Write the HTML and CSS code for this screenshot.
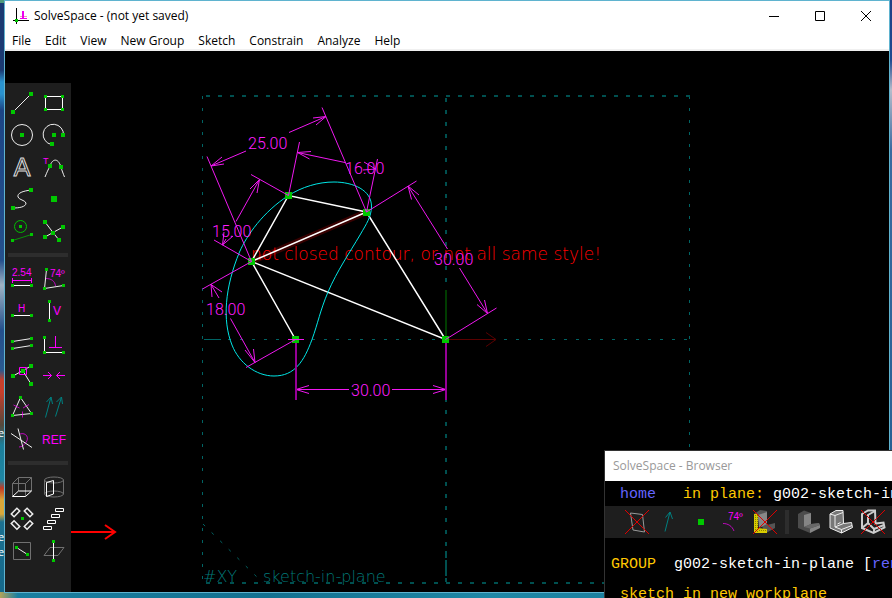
FILE: index.html
```html
<!DOCTYPE html>
<html lang="en">
<head>
<meta charset="utf-8">
<title>SolveSpace - (not yet saved)</title>
<link rel="stylesheet" href="styles.css">
</head>
<body>
<div class="desk-label desk-label-a">e</div>
<div class="desk-label desk-label-b">e</div>
<div class="desk-label desk-label-c">e</div>

<main class="window">
  <header class="titlebar">
    <svg class="app-icon" viewBox="0 0 18 18" aria-hidden="true">
      <path stroke="#000" d="M4.500 1v16M1 13.500h16"/>
      <path stroke="#e0e" stroke-width="2" d="M11 4v7"/><path stroke="#e0e" d="M8 11.500h7"/>
      <path stroke="#e9b" d="M8 9.500h2M12 9.500h3"/>
      <path class="dot dot-s" d="M4.500 13.500h0"/>
    </svg>
    <h1 class="title">SolveSpace - (not yet saved)</h1>
    <button class="win-btn" aria-label="Minimize"><svg viewBox="0 0 12 12"><path d="M1 6.500h10"/></svg></button>
    <button class="win-btn" aria-label="Maximize"><svg viewBox="0 0 12 12"><path d="M1.500 1.500h9v9h-9z"/></svg></button>
    <button class="win-btn" aria-label="Close"><svg viewBox="0 0 12 12"><path d="M1 1l10 10M11 1l-10 10"/></svg></button>
  </header>
  <nav class="menubar">
    <button>File</button><button>Edit</button><button>View</button><button>New Group</button><button>Sketch</button><button>Constrain</button><button>Analyze</button><button>Help</button>
  </nav>

  <section class="workspace">
    <aside class="toolbar">
      <div class="tools">
        <button class="tool" aria-label="Line segment"><svg viewBox="0 0 32 32"><path class="lt" d="M7 25L25 7"/><path class="dot" d="M7 25h0M25 7h0"/></svg></button>
        <button class="tool" aria-label="Rectangle"><svg viewBox="0 0 32 32"><path class="wh" d="M7.500 9.500h17v13h-17z"/><path class="dot dot-s" d="M7.500 9.500h0M24.500 9.500h0M7.500 22.500h0M24.500 22.500h0"/></svg></button>
        <button class="tool" aria-label="Circle"><svg viewBox="0 0 32 32"><circle class="lt" cx="16" cy="16" r="10.500"/><path class="dot" d="M16 16h0"/></svg></button>
        <button class="tool" aria-label="Arc"><svg viewBox="0 0 32 32"><path class="lt" d="M25.500 16A10.200 10.200 0 1 0 13.500 25.500"/><path class="dot" d="M16 16h0M25 16h0M14 25h0"/></svg></button>
        <button class="tool" aria-label="Text"><svg viewBox="0 0 32 32"><text class="outline-a" x="16" y="25" text-anchor="middle">A</text></svg></button>
        <button class="tool" aria-label="Tangent arc"><svg viewBox="0 0 32 32"><path class="lt" d="M7 26C9 21 10 19 12 15C14 8 20 6 23 16C24 20 25 22 26.500 26"/><path class="dot" d="M12 15h0M23 16h0"/><text class="mt t9" x="5" y="13">T</text></svg></button>
        <button class="tool" aria-label="Spline"><svg viewBox="0 0 32 32"><path class="lt" d="M25 7C17 8 11 10 12 14C13 17 19 17 20 20C20 24 13 25 7 25"/><path class="dot" d="M7 25h0M25 7h0"/></svg></button>
        <button class="tool" aria-label="Point"><svg viewBox="0 0 32 32"><path class="dot dot-l" d="M16 16h0"/></svg></button>
        <button class="tool" aria-label="Construction"><svg viewBox="0 0 32 32"><circle class="gr" cx="14.500" cy="11.500" r="6"/><path class="gr dim" d="M6.500 25.500l19-6"/><path class="dot dot-s" d="M14.500 11.500h0M6.500 25.500h0M25.500 19.500h0"/></svg></button>
        <button class="tool" aria-label="Split curves"><svg viewBox="0 0 32 32"><path class="lt" d="M7 7L15 17.500L21 25M7 22L15 17.500L25 12"/><path class="dot" d="M7 7h0M25 12h0M7 22h0M21 25h0M15 18h0"/></svg></button>
      </div>
      <hr>
      <div class="tools">
        <button class="tool" aria-label="Distance"><svg viewBox="0 0 32 32"><text class="mt t10" x="6" y="13">2.54</text><path class="mg" d="M6.500 17.500h19M6.500 15v5M25.500 15v5"/><path class="wh" d="M6.500 22.500h19"/><path class="dot dot-s" d="M6.500 22.500h0M25.500 22.500h0"/></svg></button>
        <button class="tool" aria-label="Angle"><svg viewBox="0 0 32 32"><path class="lt" d="M8.500 6.500l-2 19l19-3"/><path class="mg dim" d="M8 15.500C13 15.500 17 18 17.500 23"/><path class="dot dot-s" d="M8.500 6.500h0M6.500 25.500h0M25.500 22.500h0"/><text class="mt t10" x="12" y="14">74º</text></svg></button>
        <button class="tool" aria-label="Horizontal"><svg viewBox="0 0 32 32"><text class="mt t10" x="12" y="17">H</text><path class="wh" d="M6.500 20.500h19"/><path class="dot dot-s" d="M6.500 20.500h0M25.500 20.500h0"/></svg></button>
        <button class="tool" aria-label="Vertical"><svg viewBox="0 0 32 32"><text class="mt t12" x="15" y="20">V</text><path class="wh" d="M11.500 6.500v19"/><path class="dot dot-s" d="M11.500 6.500h0M11.500 25.500h0"/></svg></button>
        <button class="tool" aria-label="Parallel"><svg viewBox="0 0 32 32"><path class="lt" d="M6.500 14.500l19-3M6.500 21.500l19-3"/><path class="dot dot-s" d="M6.500 14.500h0M25.500 11.500h0M6.500 21.500h0M25.500 18.500h0"/></svg></button>
        <button class="tool" aria-label="Perpendicular"><svg viewBox="0 0 32 32"><path class="wh" d="M6.500 10.500v15h19"/><path class="mg" d="M17.500 9v11.500M11 20.500h13"/><path class="dot dot-s" d="M6.500 10.500h0M6.500 25.500h0M25.500 25.500h0"/></svg></button>
        <button class="tool" aria-label="Point on line"><svg viewBox="0 0 32 32"><path class="lt" d="M7 17L25 7M17 12l8 13"/><path class="dot" d="M7 17h0M25 7h0M25 25h0M17 12h0"/><path class="mg" d="M13.500 8.500h7v7h-7z"/></svg></button>
        <button class="tool" aria-label="Symmetric"><svg viewBox="0 0 32 32"><path class="mg" d="M5 16.500h8.500M10 13l3.500 3.500L10 20M27 16.500h-8.500M22 13l-3.500 3.500L22 20"/></svg></button>
        <button class="tool" aria-label="Equal"><svg viewBox="0 0 32 32"><path class="lt" d="M14.500 6.500l-8 18l19-2z"/><path class="mg dim" d="M7.500 14l6 3M17 17l6-3.500M16.500 20.500v6"/><path class="dot dot-s" d="M14.500 6.500h0M6.500 24.500h0M25.500 22.500h0"/></svg></button>
        <button class="tool" aria-label="Same orientation"><svg viewBox="0 0 32 32"><path class="tl" d="M7.500 26.500L13 6M8.500 11L13 6l1.500 7M17.500 25.500L23.500 6M18.500 11L23.500 6l1 7"/></svg></button>
        <button class="tool" aria-label="Other supplementary angle"><svg viewBox="0 0 32 32"><path class="mg dim" d="M14 11C20 9 24 15 19.500 20C18 22 16 24 13 24"/><path class="lt" d="M5 10.500l21 14M12 5.500l5.500 21"/></svg></button>
        <button class="tool" aria-label="Toggle reference dimension"><svg viewBox="0 0 32 32"><text class="mt t12" x="16" y="21" text-anchor="middle">REF</text></svg></button>
      </div>
      <hr>
      <div class="tools">
        <button class="tool" aria-label="Extrude"><svg viewBox="0 0 32 32"><path class="gy" d="M12.500 20V6.500h13V20M6.500 25.500v-13h13v13M6.500 12.500l6-6M19.500 12.500l6-6"/><path class="wh" d="M6.500 25.500h13l6-5.500h-13z"/></svg></button>
        <button class="tool" aria-label="Lathe"><svg viewBox="0 0 32 32"><path class="gy" d="M6.500 9v14M25.500 9v14"/><ellipse class="gy" cx="16" cy="9" rx="9.500" ry="3"/><ellipse class="gy" cx="16" cy="23" rx="9.500" ry="3"/><path class="wh" d="M8.500 11.500l7-2V23l-7 2.500z"/></svg></button>
        <button class="tool" aria-label="Step rotating"><svg viewBox="0 0 32 32"><g class="lt heavy"><rect x="5.500" y="7.500" width="8" height="4" transform="rotate(-45 9.500 9.500)"/><rect x="18.500" y="7.500" width="8" height="4" transform="rotate(45 22.500 9.500)"/><rect x="5.500" y="20" width="8" height="4" transform="rotate(45 9.500 22)"/><rect x="18.500" y="20" width="8" height="4" transform="rotate(-45 22.500 22)"/></g><path class="dot dot-s" d="M16.500 15.500h0"/></svg></button>
        <button class="tool" aria-label="Step translating"><svg viewBox="0 0 32 32"><path class="wh" d="M17.500 5.500h8v3h-8zM13.500 11.500h8v3h-8zM9.500 17.500h8v3h-8zM5.500 23.500h8v3h-8z"/></svg></button>
        <button class="tool" aria-label="Sketch in workplane"><svg viewBox="0 0 32 32"><path class="gy" d="M7.500 7.500h17v17h-17z"/><path class="lt" d="M10.500 12.500l11 7"/><path class="dot dot-s" d="M10.500 12.500h0M21.500 19.500h0"/></svg></button>
        <button class="tool" aria-label="Sketch in 3D"><svg viewBox="0 0 32 32"><path class="gy" d="M6 20.500l6-8h14l-6 8z"/><path class="wh" d="M15.500 6.500v19"/><path class="dot dot-s" d="M15.500 6.500h0M15.500 25.500h0"/></svg></button>
      </div>
    </aside>

    <svg class="sketch" viewBox="71 51 818 541" preserveAspectRatio="xMinYMin meet" role="img" aria-label="Sketch">
      <path class="pointer" d="M71 532H115M105 525l10 7l-10 7"/>

      <!-- workplane -->
      <g class="plane">
        <path d="M202.500 96V583M689.500 96V583M204 339.500H690" stroke-dasharray="3 9"/>
        <path d="M204 339.500h17"/>
        <path class="bold" d="M206 96H690M206 583H690M446 98V583" stroke-dasharray="4 8"/>
        <path class="bold" d="M446 551v30" stroke-dasharray="7 2"/>
        <path d="M203 524L263 583" stroke-dasharray="3 9"/>
      </g>
      <text class="plane-name" x="203" y="582">#XY</text>
      <text class="plane-name" x="263" y="582">sketch-in-plane</text>
      <path class="axis-x" d="M446 339.500H496M486 332.500l10 7l-10 7"/>
      <path class="axis-y" d="M446 290V339"/>

      <!-- linkage -->
      <path class="glow" d="M251.500 261.500L366.500 212"/>
      <text class="warning" x="251" y="260">not closed contour, or not all same style!</text>
      <path class="links" d="M366.500 212L288.500 195.500L251.500 261.500L366.500 212L445.500 339.500L251.500 261.500L295.500 339.500"/>
      <path class="coupler" d="M371.500 207C372 190 353 182 334 182C318 182 302 187 288.500 195.500C263 212 247 235 239.500 252C225 287 222 320 232 345C239 363 256 376 274 376C295 376 304 361 312 339.500C318 323 320 311 328 292C337 271 350 252 360 235C367 223 371 217 371.500 207Z"/>
      <path class="joints" d="M288.500 195.500h0M366.500 212.500h0M251.500 261.500h0M295.500 339.500h0M445.500 339.500h0"/>

      <!-- dimensions -->
      <g class="dims">
        <path d="M251.500 261.500L207 156.500M366.500 212L322 107.500M211 166L246 151M289 132.500L326 116.500M222 157L211 166L224 164M313 118L326 116.500L316 125"/>
        <path d="M288.500 195.500L251 174.500M251.500 261.500L214 240M222.500 245L226 239M236 221.500L259.500 179.500M250 189L259.500 179.500L257 193M224 232L222.500 245L233 236"/>
        <path d="M288.500 195.500L299.500 142M366.500 212L377.500 159M297.500 152.500L345 162.500M311 151.500L297.500 152.500L309.500 159M364 162L375.500 169L363 170"/>
        <path d="M366.500 212L416.500 181M445.500 339.500L496.500 308M408 186L447.500 249M459.500 268L487.500 313.500M411.500 199.500L408 186L419 195M477 304.500L487.500 313.500L484.500 300"/>
        <path d="M251.500 261.500L202.500 289M295.500 339.500L246 367.500M211 284.500L219 298M212 297L211 284.500L222 292M230.500 318.500L255 362.500M245 350L255 362.500L253.500 349"/>
        <path d="M288 339.500h16M296 389.500H349M392 389.500H446M309 385.500l-13 4l13 4M433 385.500l13 4l-13 4"/>
        <path class="extension" d="M296 343V400M446 343V400"/>
      </g>
      <g class="dim-text">
        <text x="248" y="149">25.00</text>
        <text x="345" y="174">16.00</text>
        <text x="212" y="237">15.00</text>
        <text x="434" y="265">30.00</text>
        <text x="206" y="315">18.00</text>
        <text x="351" y="396">30.00</text>
      </g>
    </svg>
  </section>
</main>

<section class="browser">
  <h2 class="browser-title">SolveSpace - Browser</h2>
  <p class="line crumbs"> <a href="#home">home</a>   <span class="key">in plane:</span> g002-sketch-in-plane</p>
  <div class="browser-tools">
    <button class="tool" aria-label="Show workplanes"><svg viewBox="0 0 32 32"><path class="gy2" d="M9.500 7L21.500 8.500L23.500 26L12 24z"/><path class="cross" d="M4 4l24 24M28 4L4 28"/></svg></button>
    <button class="tool" aria-label="Show normals"><svg viewBox="0 0 32 32"><path class="tl" d="M12 25.500L17 6M12.500 11.500L17 6l2.500 7"/></svg></button>
    <button class="tool" aria-label="Show points"><svg viewBox="0 0 32 32"><path class="dot dot-l" d="M16 16h0"/></svg></button>
    <button class="tool" aria-label="Show constraints"><svg viewBox="0 0 32 32"><path class="mg dim" d="M6 17.500C11 17.500 15 20 17 25"/><text class="mt t10" x="11" y="14">74º</text></svg></button>
    <button class="tool" aria-label="Show faces"><svg viewBox="0 0 32 32"><path fill="#555" d="M5 8l6-4l7 1v14l8-2v5l-9 5z"/><path fill="#888" d="M9 9l9-3v12l-8 4z"/><path fill="#d8cc00" d="M5 8h4v14l9 1v4H5z"/><path stroke="#8a8000" stroke-dasharray="1 1" d="M6.500 9v17M8.500 9v17M10 24.500h8"/><path class="cross" d="M4 4l24 24M28 4L4 28"/></svg></button>
    <span class="divider"></span>
    <button class="tool" aria-label="Show shaded model"><svg viewBox="0 0 32 32"><path fill="#4c4c4c" d="M5 8l6-3.500l7 2.500v11l8-1l1 3.500l-10 6.500L5 22z"/><path fill="#858585" d="M11 9l7-2v11l-7 3zM17 22.500l10-3.500v3l-10 5z"/><path fill="#686868" d="M11 21l7-3l8-1l1 2l-10 3.500z"/></svg></button>
    <button class="tool" aria-label="Show edges"><svg viewBox="0 0 32 32"><path fill="#777" stroke="#eee" d="M5 8l6-3.500h7l.5 13l8-1l1 5L16.500 27L5 22z"/><path stroke="#eee" d="M5 8l5 1.500V21l6.500 2.500V27M10 9.500l8-3M10 21l8.500-3.500M16.500 23.500l10.500-4M12.500 18l3-1.500"/></svg></button>
    <button class="tool" aria-label="Show hidden lines"><svg viewBox="0 0 32 32"><path stroke="#ccc" stroke-width="2" d="M5 8l6-3.500h7l.5 13l8-1l1 5L16.500 27L5 22z"/><path stroke="#ccc" stroke-width="2" d="M5 22l6-5V9l7-4M11 17l6 6v4M17 23l10-4"/><path class="cross" d="M4 4l24 24M28 4L4 28"/></svg></button>
  </div>
  <p class="line group"><span class="key">GROUP</span>  g002-sketch-in-plane [<a href="#rename">rename</a>]</p>
  <p class="line detail"> <span class="key">sketch in new workplane</span></p>
</section>
</body>
</html>
```

FILE: styles.css
```css
* { box-sizing: border-box; }

body {
  margin: 0;
  height: 100vh;
  overflow: hidden;
  display: flex;
  position: relative;
  font-family: "Open Sans", "Noto Sans", sans-serif;
  font-size: 12px;
  color: #000;
  background:
    linear-gradient(#4f9a7c, #4f9a7c) 0 0 / 4px 3px no-repeat,
    linear-gradient(90deg, #b3a45a 0, #1a7fa0 2%, #12708f 30%, #1e87a5 55%, #14708f 100%) 0 100% / 100% 6px no-repeat,
    linear-gradient(#1b3a72 0, #1b3a72 70px, #2a93cf 82px, #2a93cf 94px, #1c4585 110px, #24508c 260px, #9fb4c4 285px, #24508c 330px, #2a5a90 370px, #c8402c 380px, #c8402c 392px, #54493c 425px, #1c7f9a 445px, #1e86a4 480px, #c23b26 488px, #d9a83a 500px, #d9a83a 514px, #1c7090 522px, #15688a 100%) 0 0 / 4px 100% no-repeat,
    linear-gradient(#1f3f86 0, #1f4a90 60px, #b5bccb 90px, #3a6aa0 150px, #1f5c8f 100%);
}

button {
  margin: 0;
  padding: 0;
  border: 0;
  background: none;
  font: inherit;
  color: inherit;
}

svg { display: block; fill: none; }
h1, h2, p { margin: 0; font-size: inherit; font-weight: 400; }
a { color: #6464ff; text-decoration: none; }

.desk-label { position: absolute; left: 0; width: 4px; overflow: hidden; color: #fff; font-size: 11px; line-height: 12px; text-indent: -2px; }
.desk-label-a { top: 427px; }
.desk-label-b { top: 531px; }
.desk-label-c { top: 546px; }

/* Main window */
.window {
  flex: 1;
  display: flex;
  flex-direction: column;
  margin: 0 2px 5px 4px;
  border: 1px solid #5fb3cf;
  background: #fff;
}

.titlebar { display: flex; align-items: center; height: 29px; padding-left: 7px; }
.app-icon { width: 18px; height: 18px; }
.title { flex: 1; padding-left: 4px; line-height: 18px; }
.win-btn { width: 46px; height: 29px; display: flex; align-items: center; justify-content: center; }
.win-btn svg { width: 12px; height: 12px; stroke: #000; }

.menubar { display: flex; height: 21px; border-bottom: 2px solid #f0f0f0; }
.menubar button { padding: 0 7px; line-height: 22px; }

.workspace { flex: 1; min-height: 0; display: flex; background: #000; }

.toolbar { flex: none; margin-top: 32px; padding: 4px 1px 0; background: #1e1e1e; }
.tools { display: grid; grid-template-columns: 32px 32px; }
.toolbar hr { height: 4px; margin: 6px 2px; border: 0; background: #2d2d2d; }
.tool { width: 32px; height: 32px; }
.tool svg { width: 32px; height: 32px; }

/* Icon strokes */
.wh { stroke: #fff; stroke-width: 1; }
.lt { stroke: #eee; stroke-width: 1; }
.heavy { stroke-width: 1.5; }
.gy { stroke: #707070; }
.gy2 { stroke: #999; }
.gr { stroke: #00c000; }
.mg { stroke: #f0f; }
.tl { stroke: #008080; }
.dim { opacity: .7; }
.cross { stroke: #d00; }
.dot { stroke: #00c800; stroke-width: 4; stroke-linecap: square; }
.dot-s { stroke-width: 3; }
.dot-l { stroke-width: 6; }
.mt { fill: #f0f; font-family: "Liberation Sans", sans-serif; }
.t9 { font-size: 9px; }
.t10 { font-size: 10px; }
.t12 { font-size: 12px; }
.outline-a { stroke: #ddd; font-family: "Liberation Sans", sans-serif; font-size: 25px; font-weight: 400; }

/* Drawing area */
.sketch { flex: 1; min-width: 0; height: 100%; }
.pointer { stroke: #f00; stroke-width: 2; }
.plane { stroke: #006464; }
.plane .bold { stroke: #005050; stroke-width: 2; }
.plane-name, .warning { font-family: "DejaVu Sans", sans-serif; font-weight: 200; }
.plane-name { fill: #007878; font-size: 16px; }
.warning { fill: #ff0000; font-size: 17px; }
.axis-x { stroke: #5a0000; }
.axis-y { stroke: #003c00; stroke-width: 2; }
.glow { stroke: #380000; stroke-width: 6; }
.links { stroke: #fff; stroke-width: 1.5; }
.coupler { stroke: #00e6e6; }
.joints { stroke: #00c800; stroke-width: 7; }
.joints { stroke-linecap: square; stroke-width: 7; }
.dims { stroke: #f018f0; }
.dims .extension { stroke: #960096; stroke-width: 2; }
.dim-text { fill: #ff1eff; font-family: Roboto, sans-serif; font-weight: 300; font-size: 16px; }

/* Floating property browser */
.browser {
  position: absolute;
  left: 604px;
  top: 450px;
  right: 0;
  bottom: 0;
  overflow: hidden;
  border: solid #333;
  border-width: 1px 0 0 1px;
  background: #000;
  color: #fff;
}
.browser-title { height: 30px; padding-left: 8px; line-height: 30px; color: #999; background: #fff; }
.line { padding-left: 6px; white-space: pre; font-family: "Liberation Mono", monospace; font-size: 15px; line-height: 25px; }
.crumbs { height: 25px; line-height: 27px; }
.key { color: #ffc800; }
.browser-tools { display: flex; height: 32px; padding-left: 16px; background: #1e1e1e; }
.browser-tools .tool { flex: none; }
.divider { flex: none; width: 4px; height: 24px; margin: 4px; background: #2d2d2d; }
.group { padding-top: 14px; }
.detail { padding-top: 5px; }
```
